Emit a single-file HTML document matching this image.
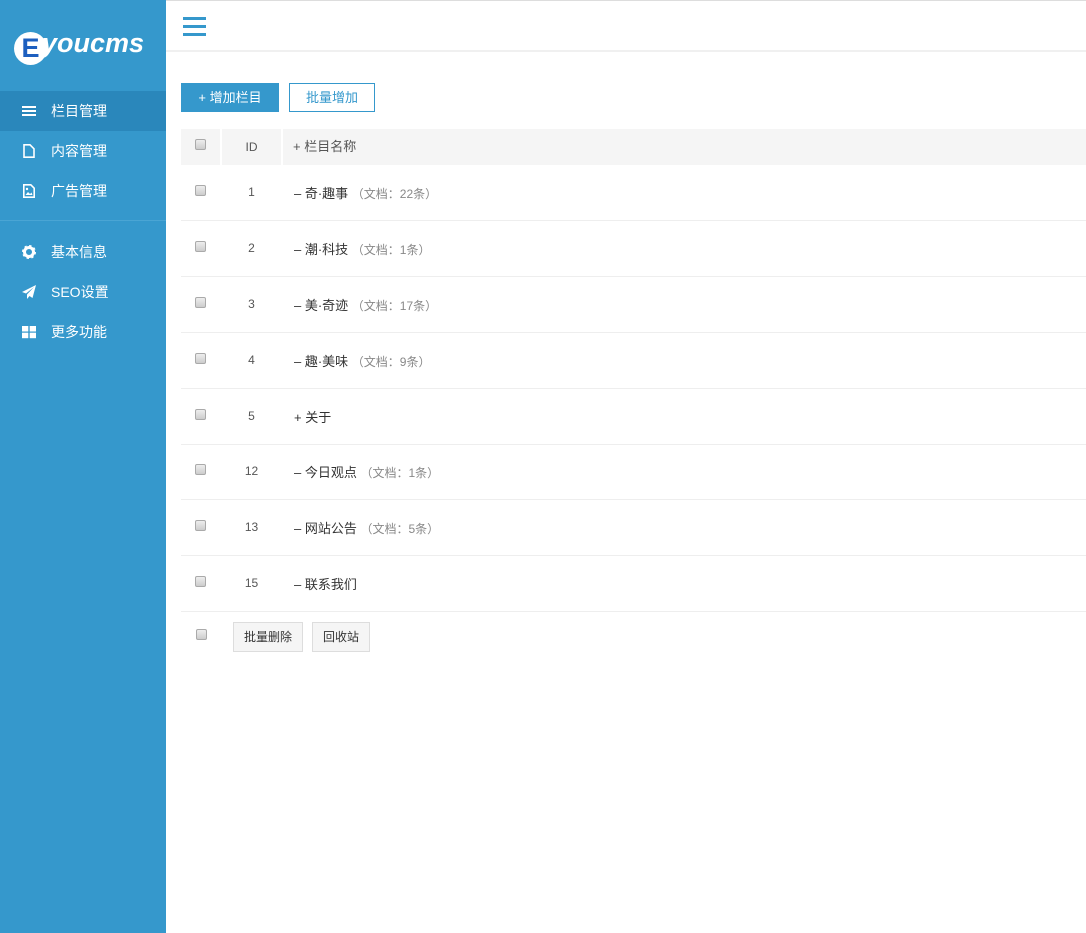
<!DOCTYPE html>
<html><head><meta charset="utf-8"><style>
*{margin:0;padding:0;box-sizing:border-box}
body{width:1086px;height:933px;overflow:hidden;font-family:"Liberation Sans","Noto Sans CJK SC",sans-serif;font-size:13px;color:#333;background:#fff;position:relative}
.side{position:absolute;left:0;top:0;width:166px;height:933px;background:#3598cc}
.logo{position:absolute;left:14px;top:28px;color:#fff;font-style:italic;font-weight:bold;font-size:27px}
.logo .e{display:inline-block;width:33px;height:33px;border-radius:50%;background:#fff;color:#1d5fbf;font-style:normal;text-align:center;line-height:33px;font-size:27px;vertical-align:-5px;margin-right:-5px}
.nav{position:absolute;left:0;width:166px;height:40px;color:#fff;font-size:14px;line-height:40px;padding-left:51px}
.nav.act{background:#2a87bb}
.ico{position:absolute;left:22px;top:13px;width:14px;height:14px}
.div{position:absolute;left:0;top:220px;width:166px;height:1px;background:#4aa5d4}
.top{position:absolute;left:166px;top:0;right:0;height:52px;border-top:1px solid #ddd;border-bottom:2px solid #f0f0f0}
.burger{position:absolute;left:17px;top:16px;width:23px}
.burger i{display:block;height:3px;background:#3598cc;margin-bottom:5px}
.btn1{position:absolute;left:181px;top:83px;width:98px;height:29px;background:#3598cc;color:#fff;line-height:29px;text-align:center;font-size:13px}
.btn2{position:absolute;left:289px;top:83px;width:86px;height:29px;border:1px solid #3598cc;color:#3598cc;line-height:27px;text-align:center;font-size:13px}
.hdr{position:absolute;left:181px;top:129px;right:0;height:36px}
.hdr div{position:absolute;top:0;height:36px;background:#f5f5f5;line-height:36px}
.cb{position:absolute;width:11px;height:11px;border:1px solid #aaa;border-radius:2px;background:linear-gradient(#eee,#ccc)}
.row{position:absolute;left:181px;right:0;height:56px;border-bottom:1px solid #eee}
.row .id{position:absolute;left:41px;width:59px;text-align:center;top:20px;color:#555;font-size:12px}
.row .nm{position:absolute;left:113px;top:18px;font-size:13px;color:#333}
.row .nm small{font-size:12px;color:#888}
.gb{position:absolute;top:622px;height:30px;border:1px solid #ddd;background:#f5f5f5;font-size:12px;line-height:28px;text-align:center;color:#333}
</style></head><body>
<div class="side">
<div class="logo"><span class="e">E</span>youcms</div>
<div class="nav act" style="top:91px"><svg class="ico" viewBox="0 0 14 14"><rect x="0" y="2" width="14" height="2" fill="#fff"/><rect x="0" y="6" width="14" height="2" fill="#fff"/><rect x="0" y="10" width="14" height="2" fill="#fff"/></svg>栏目管理</div>
<div class="nav" style="top:131px"><svg class="ico" viewBox="0 0 14 14"><path d="M2 0.8h6l4 4v8.4H2z" fill="none" stroke="#fff" stroke-width="1.6"/></svg>内容管理</div>
<div class="nav" style="top:171px"><svg class="ico" viewBox="0 0 14 14"><path d="M1.8 0.8h7l3.4 3.4v9H1.8z" fill="none" stroke="#fff" stroke-width="1.6"/><path d="M3.5 11l2.5-3 2 2 1.5-1.5 1 2.5z" fill="#fff"/><circle cx="5" cy="5" r="1.2" fill="#fff"/></svg>广告管理</div>
<div class="div"></div>
<div class="nav" style="top:232px"><svg class="ico" viewBox="0 0 14 14"><circle cx="7" cy="7" r="4.5" fill="none" stroke="#fff" stroke-width="3"/><circle cx="7" cy="7" r="6" fill="none" stroke="#fff" stroke-width="2" stroke-dasharray="2.3 2.4"/></svg>基本信息</div>
<div class="nav" style="top:272px"><svg class="ico" viewBox="0 0 14 14"><path d="M14 0L0 7l4 1.5L12 2 5 9.5V14l2.5-3 3 2z" fill="#fff"/></svg>SEO设置</div>
<div class="nav" style="top:312px"><svg class="ico" viewBox="0 0 14 14"><rect x="0" y="1" width="6.3" height="5.5" fill="#fff"/><rect x="7.7" y="1" width="6.3" height="5.5" fill="#fff"/><rect x="0" y="7.7" width="6.3" height="5.5" fill="#fff"/><rect x="7.7" y="7.7" width="6.3" height="5.5" fill="#fff"/></svg>更多功能</div>
</div>
<div class="top"><div class="burger"><i></i><i></i><i></i></div></div>
<div class="btn1">+ 增加栏目</div>
<div class="btn2">批量增加</div>
<div class="hdr">
<div style="left:0;width:39px"><span class="cb" style="left:14px;top:10px"></span></div>
<div style="left:41px;width:59px;text-align:center;color:#555;font-size:12px">ID</div>
<div style="left:102px;right:0;padding-left:10px;color:#555">+ 栏目名称</div>
</div>
<div class="row" style="top:165px"><span class="cb" style="left:14px;top:20px"></span><div class="id">1</div><div class="nm">– 奇·趣事 <small>（文档：22条）</small></div></div>
<div class="row" style="top:221px"><span class="cb" style="left:14px;top:20px"></span><div class="id">2</div><div class="nm">– 潮·科技 <small>（文档：1条）</small></div></div>
<div class="row" style="top:277px"><span class="cb" style="left:14px;top:20px"></span><div class="id">3</div><div class="nm">– 美·奇迹 <small>（文档：17条）</small></div></div>
<div class="row" style="top:333px"><span class="cb" style="left:14px;top:20px"></span><div class="id">4</div><div class="nm">– 趣·美味 <small>（文档：9条）</small></div></div>
<div class="row" style="top:389px"><span class="cb" style="left:14px;top:20px"></span><div class="id">5</div><div class="nm">+ 关于</div></div>
<div class="row" style="top:444px"><span class="cb" style="left:14px;top:20px"></span><div class="id">12</div><div class="nm">– 今日观点 <small>（文档：1条）</small></div></div>
<div class="row" style="top:500px"><span class="cb" style="left:14px;top:20px"></span><div class="id">13</div><div class="nm">– 网站公告 <small>（文档：5条）</small></div></div>
<div class="row" style="top:556px"><span class="cb" style="left:14px;top:20px"></span><div class="id">15</div><div class="nm">– 联系我们</div></div>
<span class="cb" style="left:196px;top:629px"></span>
<div class="gb" style="left:233px;width:70px">批量删除</div>
<div class="gb" style="left:312px;width:58px">回收站</div>
</body></html>
